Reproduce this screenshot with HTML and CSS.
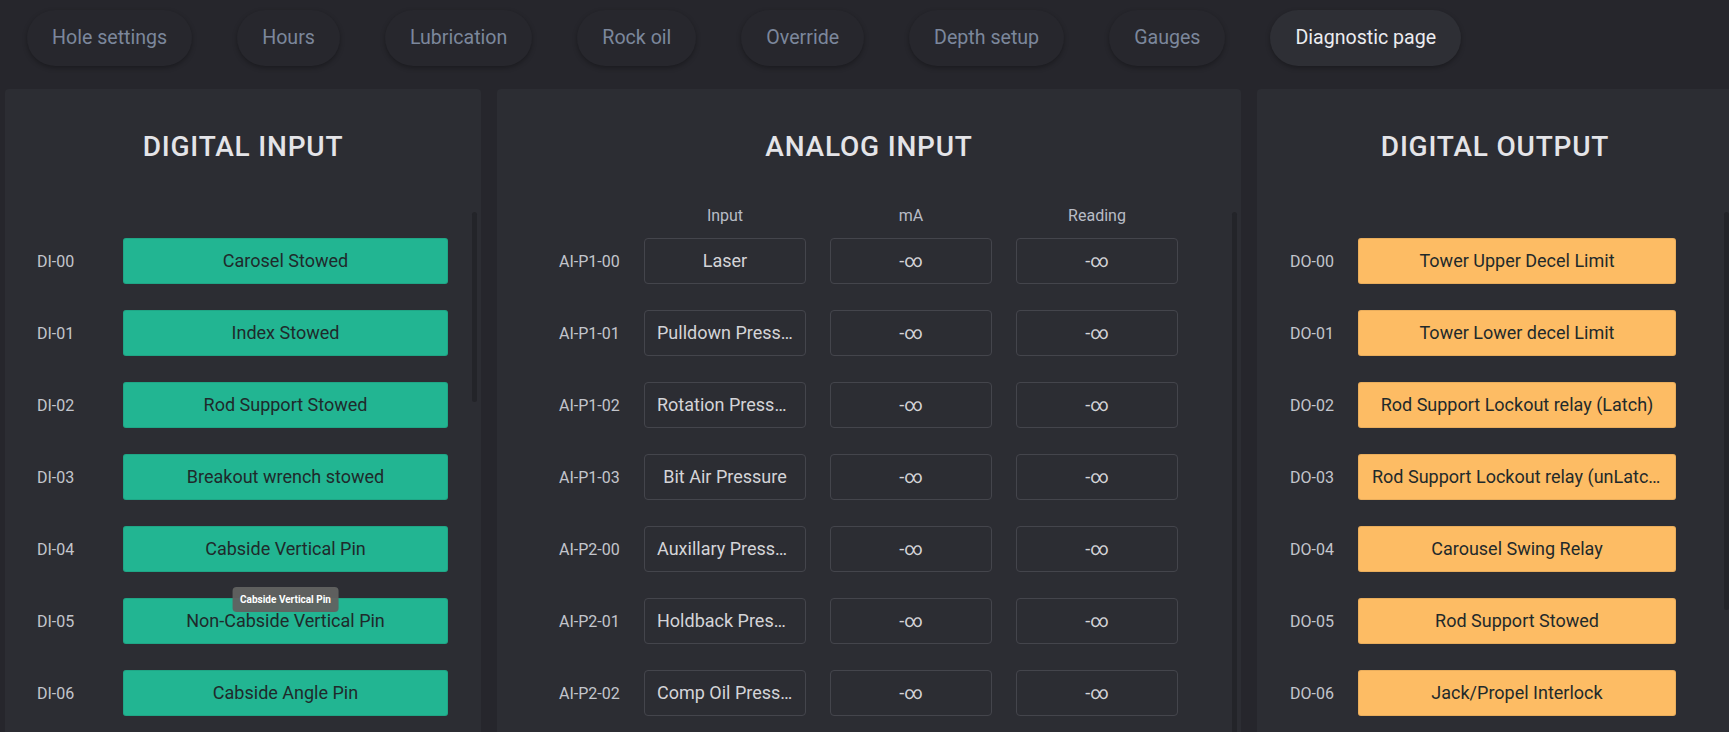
FILE: index.html
```html
<!DOCTYPE html>
<html lang="en">
  <head>
    <meta charset="UTF-8" />
    <title>Diagnostic page</title>
    <meta name="viewport" content="width=device-width, initial-scale=1.0" />
    <link rel="stylesheet" href="styles.css">
  </head>
  <body>
    <div class="tabs">
      <a class="tab" href="#">Hole settings</a>
      <a class="tab" href="#">Hours</a>
      <a class="tab" href="#">Lubrication</a>
      <a class="tab" href="#">Rock oil</a>
      <a class="tab" href="#">Override</a>
      <a class="tab" href="#">Depth setup</a>
      <a class="tab" href="#">Gauges</a>
      <a class="tab active" href="#">Diagnostic page</a>
    </div>

    <div class="panels">
      <div class="panel panel-di">
        <h2>DIGITAL INPUT</h2>
        <div id="diList" class="list"></div>
        <span class="thumb"></span>
      </div>

      <div class="panel panel-ai">
        <h2>ANALOG INPUT</h2>
        <div id="aiList" class="list">
          <div class="ai-head">
            <span>Input</span>
            <span>mA</span>
            <span>Reading</span>
          </div>
        </div>
        <span class="thumb"></span>
      </div>

      <div class="panel panel-do">
        <h2>DIGITAL OUTPUT</h2>
        <div id="doList" class="list"></div>
        <span class="thumb"></span>
      </div>
    </div>

    <script>
      const digitalInputs = [
        "Carosel Stowed",
        "Index Stowed",
        "Rod Support Stowed",
        "Breakout wrench stowed",
        "Cabside Vertical Pin",
        "Non-Cabside Vertical Pin",
        "Cabside Angle Pin",
      ];

      const digitalOutputs = [
        "Tower Upper Decel Limit",
        "Tower Lower decel Limit",
        "Rod Support Lockout relay (Latch)",
        "Rod Support Lockout relay (unLatch)",
        "Carousel Swing Relay",
        "Rod Support Stowed",
        "Jack/Propel Interlock",
      ];

      const analogInputs = [
        ["AI-P1-00", "Laser"],
        ["AI-P1-01", "Pulldown Pressure"],
        ["AI-P1-02", "Rotation Pressure"],
        ["AI-P1-03", "Bit Air Pressure"],
        ["AI-P2-00", "Auxillary Pressure"],
        ["AI-P2-01", "Holdback Pressure"],
        ["AI-P2-02", "Comp Oil Pressure"],
      ];

      function pad(n) {
        return n < 10 ? "0" + n : "" + n;
      }

      function buildDigital(listId, prefix, names, tips) {
        const list = document.getElementById(listId);
        names.forEach((name, i) => {
          const row = document.createElement("div");
          row.className = "row";
          const tip = tips[i]
            ? `<span class="tooltip">${tips[i]}</span>`
            : "";
          row.innerHTML = `
            <span class="label">${prefix}-${pad(i)}</span>
            <div class="btn-wrap">
              <div class="state">${name}</div>
              ${tip}
            </div>
          `;
          list.appendChild(row);
        });
      }

      function buildAnalog() {
        const list = document.getElementById("aiList");
        for (const [tag, name] of analogInputs) {
          const row = document.createElement("div");
          row.className = "row";
          row.innerHTML = `
            <span class="label">${tag}</span>
            <div class="box">${name}</div>
            <div class="box">-∞</div>
            <div class="box">-∞</div>
          `;
          list.appendChild(row);
        }
      }

      buildDigital("diList", "DI", digitalInputs, { 5: "Cabside Vertical Pin" });
      buildAnalog();
      buildDigital("doList", "DO", digitalOutputs, {});
    </script>
  </body>
</html>
```

FILE: styles.css
```css
body {
  font-family: Roboto, "Noto Sans", Arial, sans-serif;
  background-color: #26262c;
  margin: 0;
  padding: 0;
  height: 732px;
  overflow: hidden;
}

.tabs {
  display: flex;
  gap: 45px;
  height: 89px;
  padding: 10px 0 0 27px;
  box-sizing: border-box;
}

.tab {
  height: 56px;
  line-height: 56px;
  padding: 0 25px;
  border-radius: 28px;
  font-size: 19.6px;
  color: #7c879c;
  text-decoration: none;
  white-space: nowrap;
  background-color: #27272d;
  box-shadow: 0 2px 5px rgba(0, 0, 0, 0.3);
}

.tab.active {
  background-color: #2e2f35;
  color: #ececf0;
}

.panels {
  display: flex;
  gap: 16px;
  padding-left: 5px;
}

.panel {
  position: relative;
  flex-shrink: 0;
  background-color: #2c2d33;
  border-radius: 4px 4px 0 0;
  height: 643px;
  display: flex;
  flex-direction: column;
  overflow: hidden;
}

.panel-di,
.panel-do {
  width: 476px;
}

.panel-ai {
  width: 744px;
}

.panel h2 {
  margin: 0;
  height: 115px;
  flex-shrink: 0;
  display: flex;
  align-items: center;
  justify-content: center;
  font-size: 28px;
  font-weight: 500;
  letter-spacing: 0.8px;
  color: #e4e4e8;
}

.list {
  flex: 1;
  overflow: hidden;
  padding-top: 34px;
  box-sizing: border-box;
}

/* scrollbar thumbs, drawn over the panel edge */
.thumb {
  position: absolute;
  top: 123px;
  right: 4px;
  width: 5px;
  border-radius: 3px;
  background-color: #232429;
}

.panel-di .thumb {
  height: 190px;
}

.panel-ai .thumb {
  height: 560px;
}

.panel-do .thumb {
  height: 398px;
}

.row {
  display: flex;
  align-items: center;
  height: 46px;
}

.row + .row {
  margin-top: 26px;
}

.label {
  flex-shrink: 0;
  font-size: 16px;
  color: #c3c5cc;
}

.panel-di .row {
  padding-left: 32px;
}

.panel-di .label {
  width: 86px;
}

.panel-di .btn-wrap {
  width: 325px;
}

.panel-do .row {
  padding-left: 33px;
}

.panel-do .label {
  width: 68px;
}

.panel-do .btn-wrap {
  width: 318px;
}

.btn-wrap {
  position: relative;
  height: 46px;
}

.state {
  height: 46px;
  line-height: 46px;
  padding: 0 14px;
  box-sizing: border-box;
  border-radius: 3px;
  text-align: center;
  font-size: 18px;
  color: #1f2a2b;
  white-space: nowrap;
  overflow: hidden;
  text-overflow: ellipsis;
  background-color: #22b592;
  box-shadow: inset 0 0 0 1px rgba(0, 0, 0, 0.08);
}

.panel-do .state {
  background-color: #fdbc64;
}

.tooltip {
  position: absolute;
  top: -11px;
  left: 50%;
  transform: translateX(-50%);
  height: 25px;
  line-height: 25px;
  padding: 0 8px;
  border-radius: 4px;
  background-color: rgba(97, 98, 97, 0.95);
  color: #fff;
  font-size: 10px;
  font-weight: 700;
  white-space: nowrap;
}

/* analog table */
.panel-ai .list {
  padding-top: 2px;
}

.ai-head {
  display: flex;
  gap: 24px;
  padding-left: 147px;
  height: 32px;
  line-height: 20px;
  font-size: 16px;
  color: #b8bcc6;
}

.ai-head span {
  width: 162px;
  text-align: center;
}

.panel-ai .row {
  gap: 24px;
  padding-left: 62px;
}

.panel-ai .label {
  width: 61px;
}

.box {
  width: 162px;
  height: 46px;
  line-height: 44px;
  padding: 0 12px;
  box-sizing: border-box;
  border: 1px solid #44454c;
  border-radius: 4px;
  text-align: center;
  font-size: 18px;
  color: #d4d4d8;
  white-space: nowrap;
  overflow: hidden;
  text-overflow: ellipsis;
}
```
